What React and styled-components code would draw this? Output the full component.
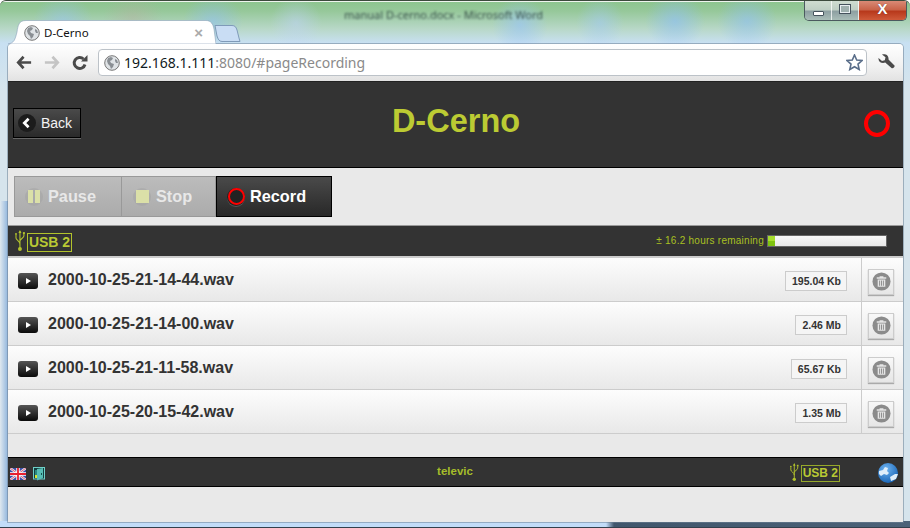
import React from 'react';
import styled, { createGlobalStyle } from 'styled-components';

const Global = createGlobalStyle`
  html, body { margin: 0; padding: 0; background: #fff; }
  * { box-sizing: border-box; }
`;

const Win = styled.div`
  width: 910px; height: 528px; overflow: hidden; position: relative;
  display: flex; flex-direction: column;
  font-family: "Liberation Sans", Arial, sans-serif;
  border-radius: 6px 6px 0 0;
  border-top: 1px solid #3c4a3c;
  border-bottom: 1px solid #33404c;
  background:
    linear-gradient(#eef4ee, #eef4ee) 0 0 / 100% 1px no-repeat,
    linear-gradient(90deg, #c2dcf8 0, #c2dcf8 606px, #40566c 614px, #4c6278 100%) 0 100% / 100% 6px no-repeat,
    linear-gradient(90deg, #dfe8ef 0, #8fb4dc 100%) 0 200px / 8px 330px no-repeat,
    radial-gradient(ellipse 30px 26px at 63px 20px, rgba(150,195,250,.5), transparent),
    radial-gradient(ellipse 30px 24px at 133px 16px, rgba(190,170,160,.35), transparent),
    radial-gradient(ellipse 30px 26px at 213px 20px, rgba(140,190,250,.5), transparent),
    radial-gradient(ellipse 26px 26px at 296px 22px, rgba(190,210,250,.5), transparent),
    radial-gradient(ellipse 28px 28px at 520px 24px, rgba(150,195,250,.6), transparent),
    radial-gradient(ellipse 24px 26px at 600px 22px, rgba(160,200,250,.5), transparent),
    radial-gradient(ellipse 30px 28px at 675px 20px, rgba(140,190,250,.6), transparent),
    radial-gradient(ellipse 30px 28px at 747px 20px, rgba(140,190,250,.55), transparent),
    linear-gradient(180deg, #8cc48e 0, #96c89a 10px, #b8d8c8 28px, #c8e0f2 42px, #d6e4ec 90px, #d6e4ec 100%);
`;
const TitleText = styled.div`
  position: absolute; top: 6px; left: 344px;
  font: 11px "Noto Sans", sans-serif; color: rgba(30,50,50,.8);
  filter: blur(.9px); white-space: nowrap;
`;
const TitleBar = styled.div`
  height: 43px; flex: none; display: flex; align-items: flex-end;
  padding-left: 8px; position: relative;
`;
const Tab = styled.div`
  position: relative; width: 208px; height: 24px;
  display: flex; align-items: center; gap: 4px; padding: 1px 0 0 16px;
  font: 11.5px "Noto Sans", sans-serif; color: #111;
`;
const TabShape = styled.svg`
  position: absolute; left: 0; top: 0; z-index: 0;
`;
const TabLabel = styled.span`position: relative; flex: 1;`;
const TabIcon = styled.span`position: relative; display: flex;`;
const TabClose = styled.span`
  position: relative; margin-right: 13px; font: bold 15px "Liberation Sans", sans-serif; color: #aaa; line-height: 12px;
`;
const NewTab = styled.svg`margin: 0 0 2px -3px; display: block;`;
const WinControls = styled.div`
  position: absolute; top: 0; right: 3px; width: 103px; height: 20px;
  display: flex; border: 1px solid #4b5a5f; border-top: none; border-radius: 0 0 5px 5px; overflow: hidden;
`;
const WinBtn = styled.div`
  width: ${p => p.$w}px; height: 100%; display: flex; align-items: center; justify-content: center;
  border-right: 1px solid rgba(255,255,255,.75);
  background: ${p => p.$close
    ? 'linear-gradient(180deg,#d98a76 0,#c9644a 45%,#b8391c 55%,#cf5a3a 100%)'
    : 'linear-gradient(180deg,#cfdcd0 0,#bfcfc4 45%,#8ea0a2 55%,#a9bdb8 100%)'};
  &:last-child { border-right: none; }
`;
const MinGlyph = styled.span`
  width: 11px; height: 5px; margin-top: 6px; background: #fff; border: 1px solid #45525c; border-radius: 1px;
`;
const MaxGlyph = styled.span`
  width: 12px; height: 10px; margin-top: -3px; border: 2px solid #e8eef0; outline: 1px solid #45525c; outline-offset: -1px;
  background: #9fb0ae;
`;
const CloseGlyph = styled.span`
  font: bold 15px "Liberation Sans", sans-serif; color: #fff; line-height: 14px; margin-top: -4px;
  text-shadow: 0 0 1px #5a2a1a;
`;

const Frame = styled.div`
  flex: 1; margin: 0 7px 5px 8px; display: flex; flex-direction: column; min-height: 0;
  border-radius: 4px 4px 0 0; background: #e9e9e9; box-shadow: 0 0 0 1px rgba(110,130,150,.55);
`;
const Toolbar = styled.div`
  height: 37px; flex: none; display: flex; align-items: center;
  background: linear-gradient(180deg, #fff 0, #f1f1f1 60%, #e2e2e2 100%);
  border-radius: 4px 4px 0 0;
`;
const NavBtn = styled.span`
  width: 28px; height: 28px; display: flex; align-items: center; justify-content: center; flex: none;
`;
const NavGroup = styled.div`display: flex; padding-left: 2px; width: 90px; flex: none;`;
const Omni = styled.div`
  width: 769px; height: 27px; flex: none; border: 1px solid #bcc2c8; border-radius: 4px; background: #fff;
  display: flex; align-items: center; padding: 0 3px 0 5px; gap: 4px;
  font: 14px "Noto Sans", sans-serif; color: #111;
`;
const Host = styled.span`color: #0f1a22;`;
const Path = styled.span`color: #8a8a8a; flex: 1;`;
const Wrench = styled.span`margin-left: 10px; display: flex; margin-top: -2px;`;

const Header = styled.div`
  height: 87px; flex: none; background: #333; border-top: 1px solid #222; border-bottom: 1px solid #000;
  display: grid; grid-template-columns: 1fr auto 1fr; align-items: center; padding: 0 13px 2px 5px;
`;
const BackBtn = styled.div`
  width: 68px; height: 30px; margin-bottom: 2px; border: 1px solid #000; justify-self: start;
  background: linear-gradient(180deg,#4a4a4a,#2a2a2a); box-shadow: 0 1px 0 #666;
  display: flex; align-items: center; gap: 5px; padding-left: 4px;
  color: #f4f4f4; font-size: 14px;
`;
const Title = styled.h1`
  margin: 0 0 4px 9px; font-size: 32.5px; font-weight: bold; color: #bccb33; line-height: 1;
`;
const RecIndicator = styled.div`
  justify-self: end; width: 26px; height: 27px; border: 4px solid #f00; border-radius: 50%;
`;
const Controls = styled.div`
  height: 57px; flex: none; padding: 8px 0 0 6px; display: flex; align-items: flex-start;
`;
const CtlBtn = styled.div`
  height: 41px; width: ${p => p.$w}px; display: flex; align-items: center; gap: 5px; padding-left: ${p => p.$pl}px;
  font-size: 16.3px; font-weight: bold;
  border: 1px solid ${p => p.$active ? '#000' : '#999'};
  ${p => (p.$first || p.$active) ? '' : 'border-left: none;'}
  color: ${p => p.$active ? '#fff' : '#e8e8e8'};
  background: ${p => p.$active ? 'linear-gradient(180deg,#4a4a4a,#282828)' : 'linear-gradient(180deg,#bcbcbc,#ababab)'};
`;
const CtlIconWrap = styled.span`
  width: 18px; height: 18px; border-radius: 50%; background: rgba(160,160,160,.45); display: flex; align-items: center; justify-content: center; flex: none;
`;
const PauseBars = styled.span`
  display: flex; gap: 2px;
  & > i { display: block; width: 5px; height: 13px; background: #dbe0a8; }
`;
const StopSquare = styled.span`width: 13px; height: 13px; background: #dbe0a8;`;
const RecIcon = styled.span`
  width: 18px; height: 18px; border-radius: 50%; background: #222; display: flex; align-items: center; justify-content: center; flex: none; box-shadow: 0 1px 0 #555;
  &::after { content: ""; width: 13px; height: 13px; border: 2px solid #f00; border-radius: 50%; }
`;
const StatusBar = styled.div`
  height: 33px; flex: none; background: #333; border-top: 1px solid #9a9a9a; border-bottom: 2px solid #ccc;
  display: flex; align-items: center; padding: 0 16px 1px 7px;
`;
const UsbWrap = styled.div`display: flex; align-items: center; gap: 2px;`;
const UsbBox = styled.span`
  border: 1px solid ${p => p.$small ? '#95a82a' : '#b2c32c'}; color: #b9c934;
  font-size: ${p => p.$small ? 12 : 14}px; font-weight: bold;
  line-height: ${p => p.$small ? 15 : 17}px; height: ${p => p.$small ? 17 : 19}px; padding: 0 1px 0 1px; margin-top: ${p => p.$small ? 1 : 3}px;
`;
const Spacer = styled.div`flex: 1;`;
const Remaining = styled.span`font-size: 10px; color: #a9c022; margin-right: 3px; letter-spacing: .25px;`;
const Progress = styled.div`
  width: 120px; height: 12px; border: 1px solid #666; background: linear-gradient(180deg,#f8f8f8,#e8e8e8);
  display: flex;
`;
const ProgressFill = styled.div`background: linear-gradient(180deg,#a6dd2c 50%,#7fc310 50%);`;
const List = styled.div`display: flex; flex-direction: column;`;
const Row = styled.div`
  height: 44px; display: flex; align-items: stretch; border-bottom: 1px solid #ccc;
  background: linear-gradient(180deg,#fdfdfd,#e8e8e8);
`;
const RowMain = styled.div`flex: 1; display: flex; align-items: center; padding: 1px 14px 0 10px;`;
const Play = styled.span`
  width: 20px; height: 16px; border-radius: 3px; flex: none; margin-top: 2px;
  background: linear-gradient(180deg,#555,#0a0a0a); display: flex; align-items: center; justify-content: center;
  &::after { content: ""; border-left: 5px solid #fff; border-top: 3px solid transparent; border-bottom: 3px solid transparent; }
`;
const FileName = styled.span`
  margin-left: 10px; flex: 1; font-size: 16px; font-weight: bold; color: #333;
`;
const SizeBadge = styled.span`
  height: 20px; padding: 0 5px 0 6px; border: 1px solid #ccc; background: #f5f5f5;
  font-size: 10.5px; font-weight: bold; color: #333; line-height: 19px; margin-top: 2px;
`;
const RowAction = styled.div`
  width: 42px; flex: none; border-left: 1px solid #ccc; display: flex; align-items: center; justify-content: center; padding: 4px 3px 0 0;
`;
const DeleteBtn = styled.div`
  width: 26px; height: 26px; border: 1px solid #ccc; background: linear-gradient(180deg,#f8f8f8,#e6e6e6); box-shadow: 0 1px 1px #aaa;
  display: flex; align-items: center; justify-content: center;
`;
const Gap = styled.div`height: 23px; flex: none;`;
const Footer = styled.div`
  height: 30px; flex: none; background: #333; border-top: 1px solid #000; border-bottom: 1px solid #000;
  display: grid; grid-template-columns: 1fr auto 1fr; align-items: center; padding: 0 5px 0 2px;
`;
const FootLeft = styled.div`display: flex; align-items: center; gap: 7px; margin-top: 3px;`;
const FootMid = styled.div`font-size: 11.5px; font-weight: bold; color: #a6bd2a; margin: -2px 0 0 2px;`;
const FootRight = styled.div`display: flex; align-items: center; justify-content: flex-end; gap: 38px; margin-top: 1px;`;
const Rest = styled.div`flex: 1;`;

const Globe = ({ size = 16 }) => (
  <svg width={size} height={size} viewBox="0 0 16 16">
    <circle cx="8" cy="8" r="7.3" fill="#dfe3e6" stroke="#777" />
    <path d="M4 3l3-1 2 1-1 2-2 1 1 2 3 1-1 3-2 2-1-3-2-2-1-3zM11 4l2 1 1 3-2 0-1-2z" fill="#8a8f94" />
  </svg>
);
const Usb = ({ h = 22 }) => (
  <svg width={h * 0.45} height={h} viewBox="0 0 10 22" fill="none" stroke="#b2c32c" strokeWidth="1.1">
    <path d="M5 1v17M1 5v3c0 2 4 3 4 6M9 4v2c0 2-4 3-4 5" />
    <path d="M5 0l-1.5 3h3z" fill="#b2c32c" stroke="none" />
    <circle cx="5" cy="19" r="2" fill="#b2c32c" stroke="none" />
    <circle cx="1" cy="4" r="1" fill="#b2c32c" stroke="none" />
    <rect x="8" y="2" width="2" height="2" fill="#b2c32c" stroke="none" />
  </svg>
);
const Trash = () => (
  <svg width="19" height="19" viewBox="0 0 20 20">
    <circle cx="10" cy="10" r="9.5" fill="#8b8b8b" />
    <path d="M8 4.5h4v1h3v1.5H5V5.5h3zM6 8h8v7.5H6z" fill="#e6e6e6" />
    <path d="M8 9v5.5M10 9v5.5M12 9v5.5" stroke="#8b8b8b" />
  </svg>
);
const Flag = () => (
  <svg width="16" height="12" viewBox="0 0 16 12">
    <rect width="16" height="12" fill="#3a4fa8" />
    <path d="M0 0l16 12M16 0L0 12" stroke="#f2e8ee" strokeWidth="2.4" />
    <path d="M0 0l16 12M16 0L0 12" stroke="#d04058" strokeWidth=".8" />
    <path d="M8 0v12M0 6h16" stroke="#fff" strokeWidth="3.4" />
    <path d="M8 0v12M0 6h16" stroke="#e82030" strokeWidth="1.8" />
  </svg>
);
const Door = () => (
  <svg width="12" height="14" viewBox="0 0 12 14">
    <rect x=".5" y=".5" width="11" height="11.5" fill="#123f40" stroke="#6fd0c8" />
    <rect x="2" y="3" width="2" height="8" fill="#2a8a80" />
    <rect x="2" y="8" width="2" height="3" fill="#d8e830" />
    <path d="M4 2l6-1v10l-6 2.5z" fill="#58bdb4" />
    <rect x="8" y="6" width="1" height="2" fill="#16504e" />
  </svg>
);

const files = [
  ['2000-10-25-21-14-44.wav', '195.04 Kb'],
  ['2000-10-25-21-14-00.wav', '2.46 Mb'],
  ['2000-10-25-21-11-58.wav', '65.67 Kb'],
  ['2000-10-25-20-15-42.wav', '1.35 Mb'],
];

export default function App() {
  return (
    <Win>
      <Global />
      <TitleBar>
        <TitleText>manual D-cerno.docx - Microsoft Word</TitleText>
        <Tab>
          <TabShape width="208" height="24" viewBox="0 0 208 24">
            <path d="M0 24C6 23 7 20 9 12 10 5 11 .5 18 .5H198C203 .5 205 4 206 9L208 24Z" fill="#fff" stroke="#8aa0b8" strokeWidth=".6" />
          </TabShape>
          <TabIcon><Globe /></TabIcon>
          <TabLabel>D-Cerno</TabLabel>
          <TabClose>×</TabClose>
        </Tab>
        <NewTab width="28" height="17" viewBox="0 0 28 17">
          <path d="M2 .5H19C22 .5 23 2 24 5L26 13 27 16.5H9C6 16.5 5 14 4 11Z" fill="#c9ddf4" stroke="#7f9ab8" />
        </NewTab>
        <WinControls>
          <WinBtn $w={28}><MinGlyph /></WinBtn>
          <WinBtn $w={27}><MaxGlyph /></WinBtn>
          <WinBtn $w={48} $close><CloseGlyph>X</CloseGlyph></WinBtn>
        </WinControls>
      </TitleBar>
      <Frame>
        <Toolbar>
          <NavGroup>
            <NavBtn>
              <svg width="16" height="15" viewBox="0 0 18 16"><path d="M8.5 1.5L2.5 8l6 6.5M3 8H17" fill="none" stroke="#4a4a4a" strokeWidth="3" /></svg>
            </NavBtn>
            <NavBtn>
              <svg width="16" height="15" viewBox="0 0 18 16"><path d="M9.5 1.5L15.5 8l-6 6.5M15 8H1" fill="none" stroke="#c4c4c4" strokeWidth="3" /></svg>
            </NavBtn>
            <NavBtn>
              <svg width="16" height="16" viewBox="0 0 16 16"><path d="M13 9.5A5.5 5.5 0 1 1 11.5 4" fill="none" stroke="#4a4a4a" strokeWidth="3" /><path d="M9 6.5h6.5V0z" fill="#4a4a4a" /></svg>
            </NavBtn>
          </NavGroup>
          <Omni>
            <Globe />
            <Path><Host>192.168.1.111</Host>:8080/#pageRecording</Path>
            <svg width="17" height="17" viewBox="0 0 17 17"><path d="M8.5 1l2.2 5 5.3.5-4 3.6 1.2 5.4-4.7-2.8-4.7 2.8 1.2-5.4-4-3.6 5.3-.5z" fill="#fff" stroke="#5a6e8a" strokeWidth="1.6" /></svg>
          </Omni>
          <Wrench>
            <svg width="18" height="18" viewBox="0 0 18 18"><path d="M1.5 5L5 8l2.8-.8.7-3L5 1.6C8 .5 12 2 11.5 6.5l6 6c.7 1.2-1.5 3.4-2.7 2.7L8.2 9.6C5 11 1 9 1.5 5z" fill="#4a4a4a" /></svg>
          </Wrench>
        </Toolbar>
        <Header>
          <BackBtn>
            <svg width="18" height="18" viewBox="0 0 17 17"><circle cx="8.5" cy="8.5" r="8.5" fill="#1c1c1c" /><path d="M10 4.5L6 8.5l4 4" fill="none" stroke="#fff" strokeWidth="2.6" /></svg>
            Back
          </BackBtn>
          <Title>D-Cerno</Title>
          <RecIndicator />
        </Header>
        <Controls>
          <CtlBtn $w={108} $pl={10} $first><CtlIconWrap><PauseBars><i /><i /></PauseBars></CtlIconWrap>Pause</CtlBtn>
          <CtlBtn $w={94} $pl={11}><CtlIconWrap><StopSquare /></CtlIconWrap>Stop</CtlBtn>
          <CtlBtn $w={116} $pl={10} $active><RecIcon />Record</CtlBtn>
        </Controls>
        <StatusBar>
          <UsbWrap><Usb /><UsbBox>USB 2</UsbBox></UsbWrap>
          <Spacer />
          <Remaining>± 16.2 hours remaining</Remaining>
          <Progress><ProgressFill style={{ width: `${(7 / 118) * 100}%` }} /></Progress>
        </StatusBar>
        <List>
          {files.map(([name, size]) => (
            <Row key={name}>
              <RowMain>
                <Play />
                <FileName>{name}</FileName>
                <SizeBadge>{size}</SizeBadge>
              </RowMain>
              <RowAction><DeleteBtn><Trash /></DeleteBtn></RowAction>
            </Row>
          ))}
        </List>
        <Gap />
        <Footer>
          <FootLeft><Flag /><Door /></FootLeft>
          <FootMid>televic</FootMid>
          <FootRight>
            <UsbWrap><Usb h={19} /><UsbBox $small>USB 2</UsbBox></UsbWrap>
            <svg width="20" height="20" viewBox="0 0 20 20">
              <defs>
                <radialGradient id="sph" cx=".4" cy=".3" r=".8">
                  <stop offset="0" stopColor="#6fb4f0" />
                  <stop offset="1" stopColor="#0f5cb0" />
                </radialGradient>
              </defs>
              <circle cx="10" cy="10" r="10" fill="url(#sph)" />
              <path d="M1 8l4-1 2-3 3 1-1 3 2 2-2 2-3-1-3 2-2-2zM12 14l5-3 3 0-2 5-5 2z" fill="#dfeefa" />
            </svg>
          </FootRight>
        </Footer>
        <Rest />
      </Frame>
    </Win>
  );
}
